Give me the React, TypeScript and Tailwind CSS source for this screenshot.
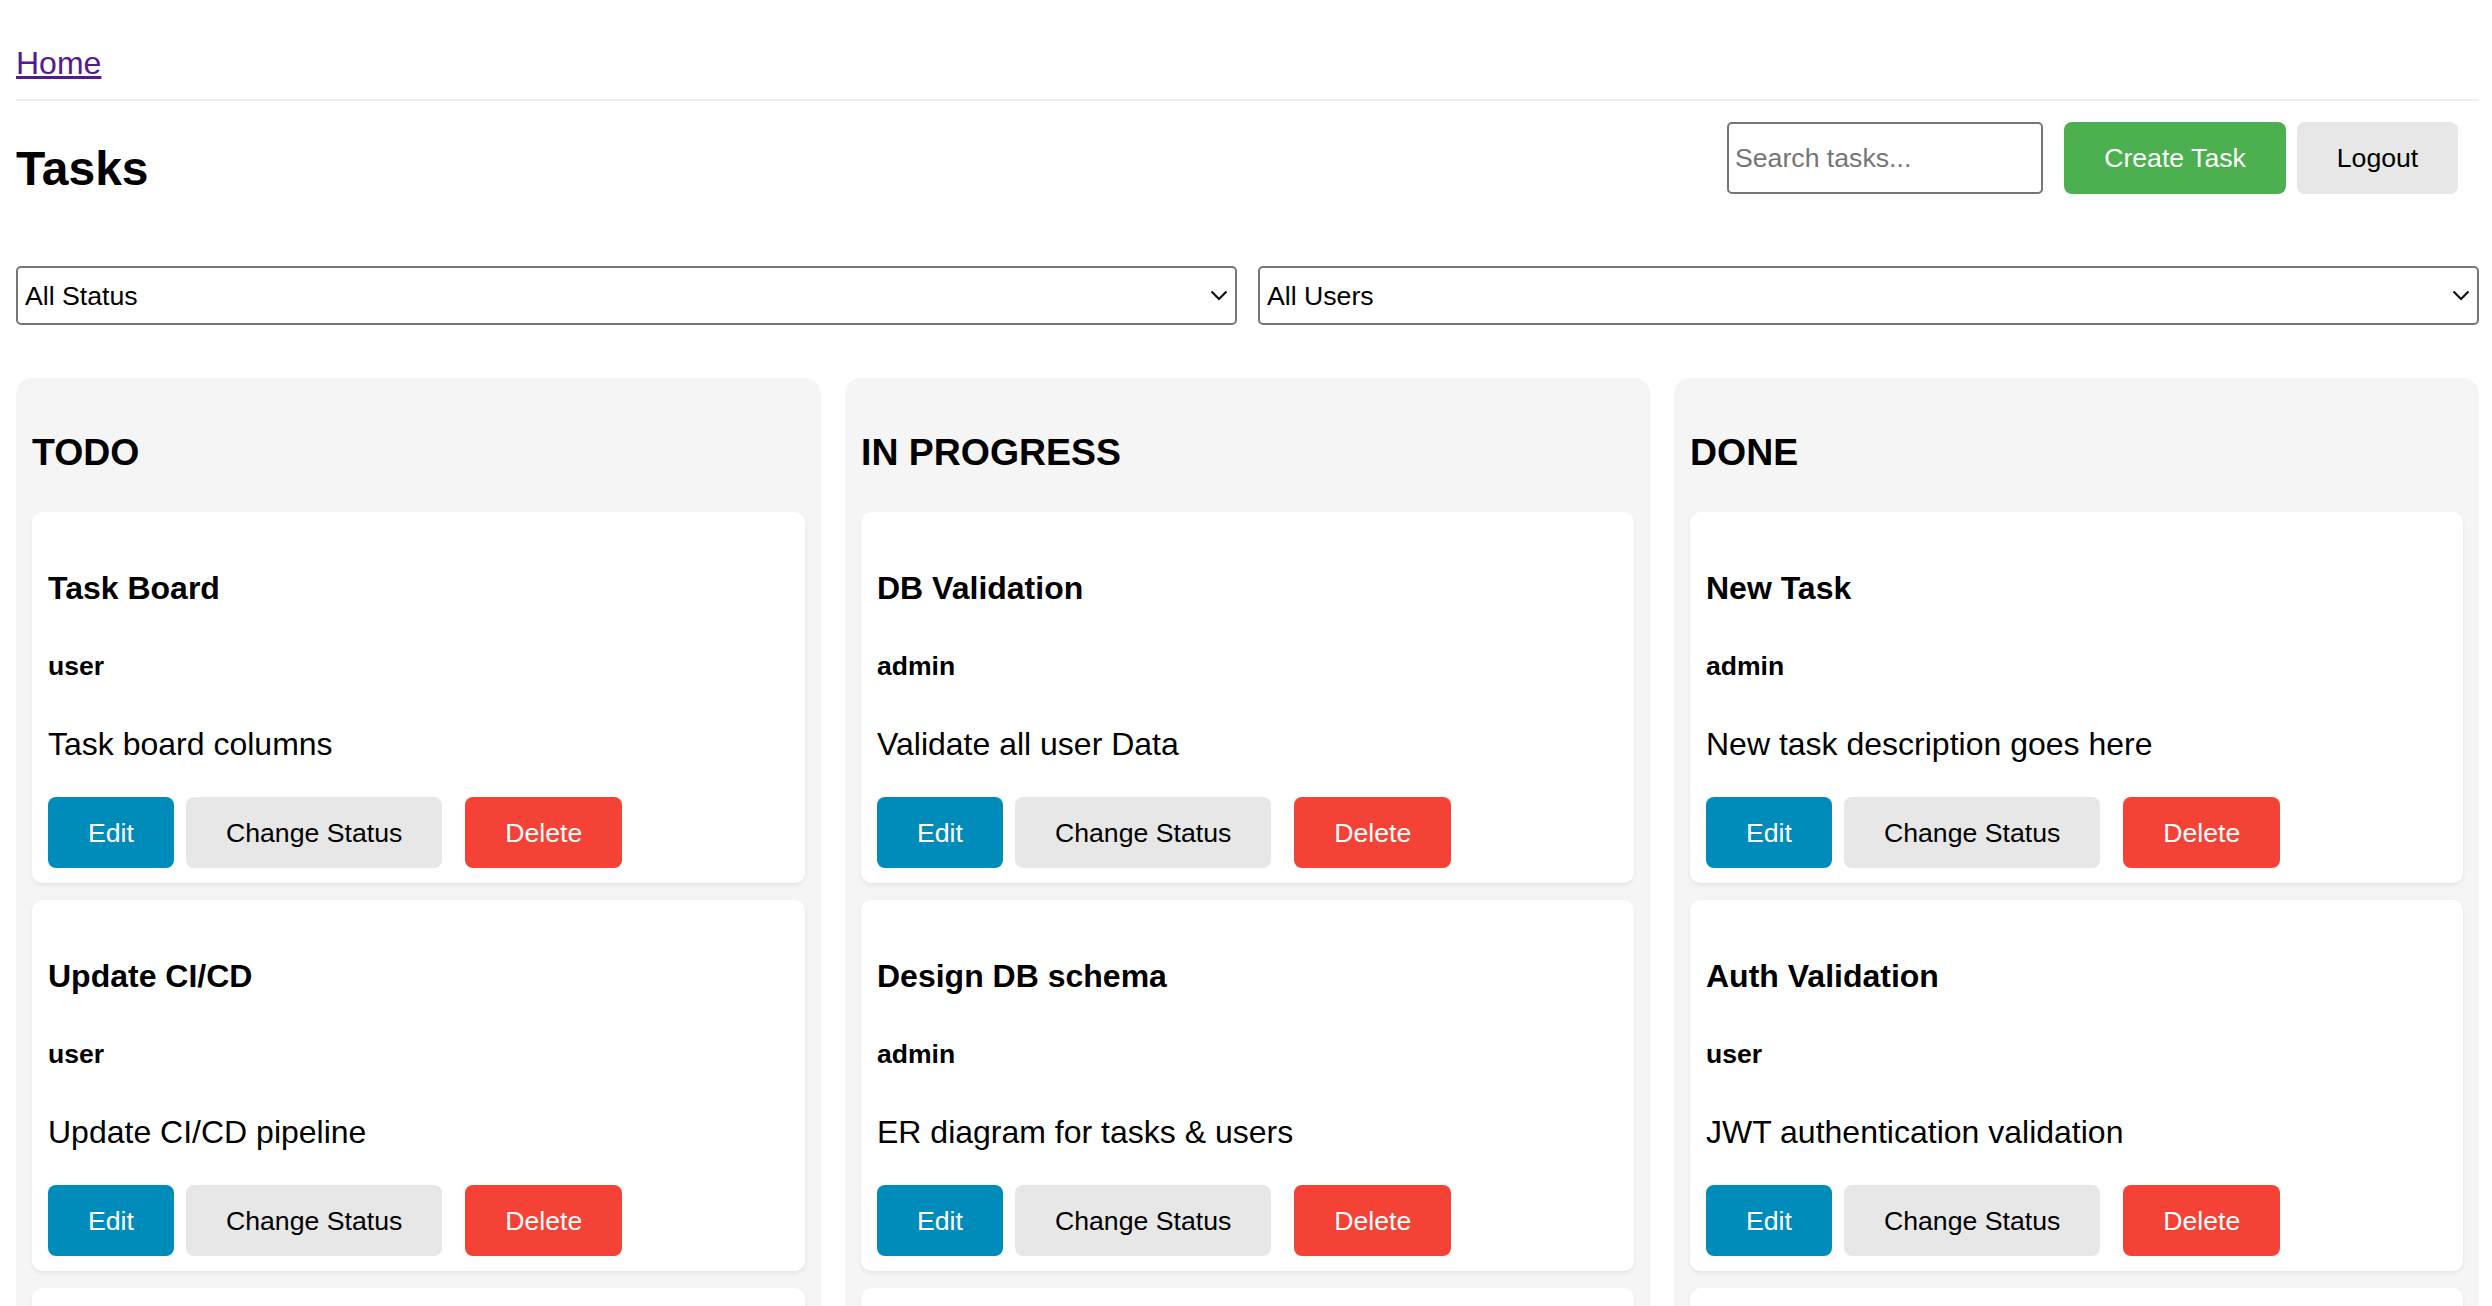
import React from "react";

type Task = {
  title: string;
  user: string;
  description: string;
};

const columns: { name: string; tasks: Task[] }[] = [
  {
    name: "TODO",
    tasks: [
      { title: "Task Board", user: "user", description: "Task board columns" },
      { title: "Update CI/CD", user: "user", description: "Update CI/CD pipeline" },
    ],
  },
  {
    name: "IN PROGRESS",
    tasks: [
      { title: "DB Validation", user: "admin", description: "Validate all user Data" },
      { title: "Design DB schema", user: "admin", description: "ER diagram for tasks & users" },
    ],
  },
  {
    name: "DONE",
    tasks: [
      { title: "New Task", user: "admin", description: "New task description goes here" },
      { title: "Auth Validation", user: "user", description: "JWT authentication validation" },
    ],
  },
];

// FAKE SELECT (looks like the native one)
const FilterSelect = ({ label }: { label: string }) => {
  return (
    <div className="flex-1 h-[59px] border-2 border-[#767676] rounded-[5px] bg-white flex items-center justify-between pl-[7px] pr-[7px]">
      <span className="text-[26.67px] text-black">{label}</span>
      <svg width="18" height="11" viewBox="0 0 18 11" fill="none">
        <path d="M1.5 1.5 L9 9 L16.5 1.5" stroke="#111" strokeWidth="2.2" />
      </svg>
    </div>
  );
};

const TaskCard = ({ task }: { task: Task }) => {
  return (
    <div className="bg-white rounded-[10px] px-[16px] pt-[16px] pb-[15px] mb-[17px] shadow-[0_2px_4px_rgba(0,0,0,0.07)]">
      <h4 className="mt-[42px] text-[32px] leading-[37px] font-bold text-black">
        {task.title}
      </h4>
      <h5 className="mt-[44px] text-[26.56px] leading-[30px] font-bold text-black">
        {task.user}
      </h5>
      <p className="mt-[45px] text-[32px] leading-[37px] text-black">
        {task.description}
      </p>
      <div className="mt-[34px] flex">
        <button className="h-[71px] px-[40px] rounded-[8px] bg-[#008cba] text-white text-[26.67px]">
          Edit
        </button>
        <button className="ml-[12px] h-[71px] px-[40px] rounded-[8px] bg-[#e7e7e7] text-black text-[26.67px]">
          Change Status
        </button>
        <button className="ml-[23px] h-[71px] px-[40px] rounded-[8px] bg-[#f44336] text-white text-[26.67px]">
          Delete
        </button>
      </div>
    </div>
  );
};

const App = () => {
  return (
    <div className="h-screen overflow-hidden bg-white pl-[16px] pr-[13px] font-['Liberation_Sans',Arial,sans-serif] text-black">
      {/* NAV */}
      <nav className="pt-[45px] pb-[17px] border-b-2 border-[#eeeeee]">
        <a href="#" className="text-[32px] leading-[37px] text-[#551a8b] underline">
          Home
        </a>
      </nav>

      {/* HEADER */}
      <div className="flex justify-between items-start">
        <h2 className="mt-[40px] text-[48px] leading-[55px] font-bold">Tasks</h2>
        <div className="mt-[21px] mr-[21px] flex items-center">
          <input
            type="text"
            placeholder="Search tasks..."
            className="w-[316px] h-[72px] border-2 border-[#767676] rounded-[5px] px-[6px] text-[26.67px] placeholder:text-[#757575] outline-none"
          />
          <button className="ml-[21px] w-[222px] h-[72px] rounded-[8px] bg-[#4caf50] text-white text-[26.67px]">
            Create Task
          </button>
          <button className="ml-[11px] w-[161px] h-[72px] rounded-[8px] bg-[#e7e7e7] text-black text-[26.67px]">
            Logout
          </button>
        </div>
      </div>

      {/* FILTERS */}
      <div className="mt-[70px] flex gap-[21px]">
        <FilterSelect label="All Status" />
        <FilterSelect label="All Users" />
      </div>

      {/* BOARD */}
      <div className="mt-[53px] grid grid-cols-3 gap-[24px]">
        {columns.map((col, index) => {
          return (
            <div key={index} className="bg-[#f5f5f5] rounded-[16px] p-[16px]">
              <h3 className="mt-[37px] mb-[38px] text-[37.44px] leading-[43px] font-bold">
                {col.name}
              </h3>
              {col.tasks.map((task, i) => (
                <TaskCard key={i} task={task} />
              ))}
              {/* next card, only its top shows in the viewport */}
              <div className="h-[371px] bg-white rounded-[10px] shadow-[0_2px_4px_rgba(0,0,0,0.07)]"></div>
            </div>
          );
        })}
      </div>
    </div>
  );
};

export default App;
